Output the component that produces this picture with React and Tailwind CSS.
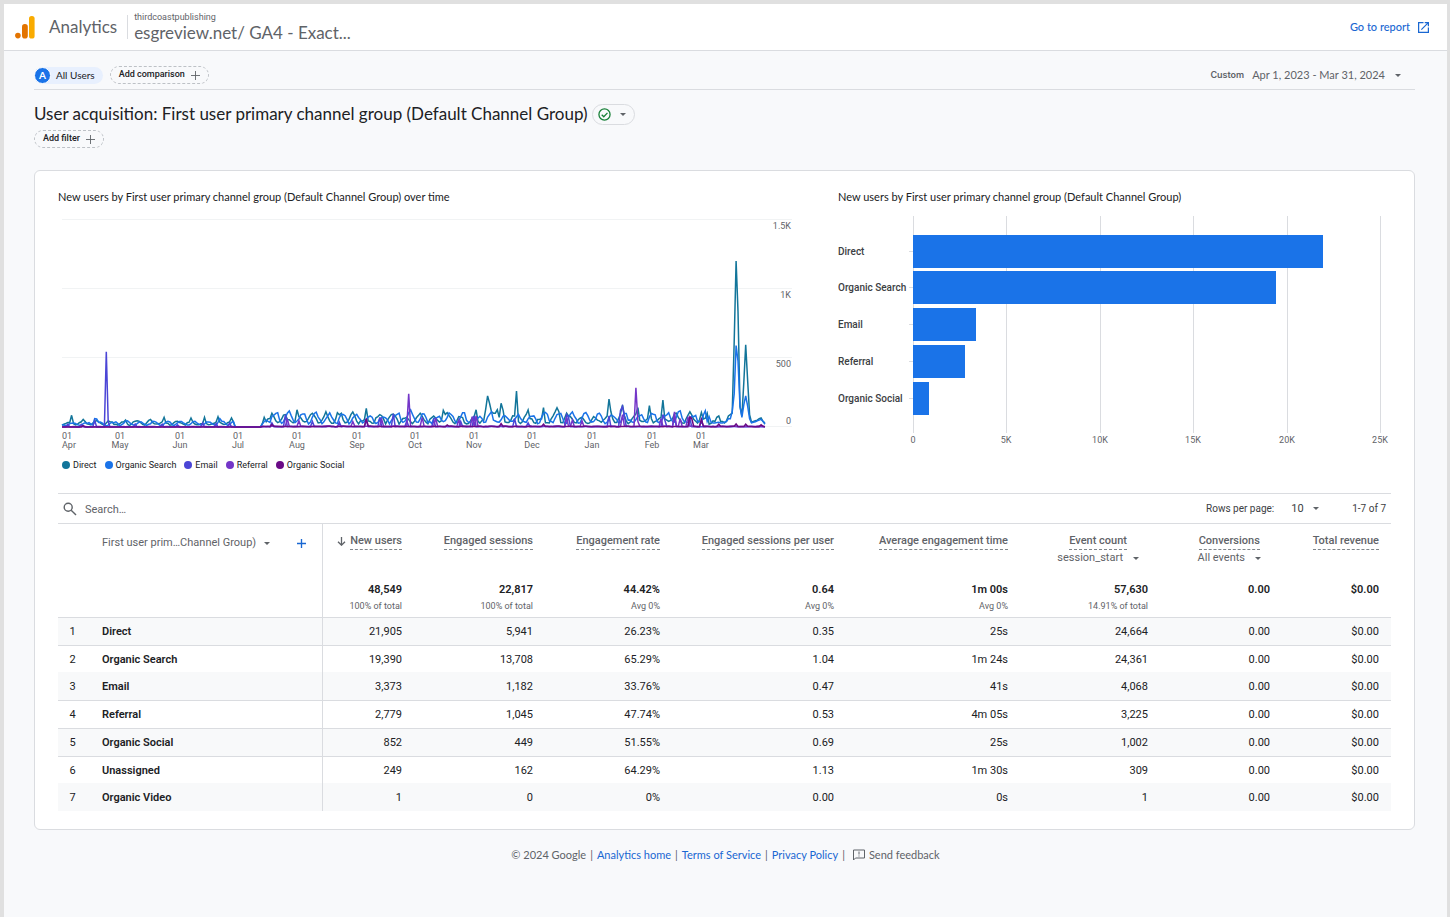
import { useId, useState } from "react";

const DAYS = 366;

// Days of the year range where tracking was off
const isGap = (day) => day > 89 && day < 104;

// Small repeatable wobble so daily values don't look flat
const wobble = (day, seed) => {
  const n = Math.sin(day * 12.9898 + seed * 78.233) * 43758.5453;
  return n - Math.floor(n);
};

function buildSeries({ early, late, weekly, phase, seed, peaks }) {
  const values = [];
  for (let day = 0; day < DAYS; day++) {
    if (day in peaks) {
      values.push(peaks[day]);
      continue;
    }
    if (isGap(day)) {
      values.push(0);
      continue;
    }
    const base = day < 104 ? early : late;
    const wave = 0.5 + 0.5 * Math.sin(((day + phase) / 7) * Math.PI * 2);
    // busier and quieter weeks
    const week = 0.6 + wobble(Math.floor(day / 7), seed) * 0.8;
    values.push(base * (0.3 + wobble(day, seed) * 0.4) + wave * weekly * base * week);
  }
  return values;
}

const series = [
  {
    name: "Direct",
    color: "#12759a",
    values: buildSeries({
      early: 30,
      late: 60,
      weekly: 0.9,
      phase: 5,
      seed: 1,
      peaks: {
        5: 85, 11: 55, 33: 50, 46: 55, 53: 70, 67: 65, 74: 70, 81: 75, 88: 65,
        104: 25, 105: 70, 109: 100, 122: 125, 130: 100, 137: 110, 145: 100,
        150: 90, 158: 135, 171: 90, 186: 100, 198: 120, 215: 125, 220: 130,
        221: 225, 222: 170, 223: 110, 224: 100, 225: 100, 226: 125, 227: 70,
        228: 172, 229: 120, 236: 260, 242: 123, 250: 140, 256: 110, 257: 140,
        258: 110, 263: 80, 270: 70, 284: 203, 285: 110, 291: 160, 299: 140,
        305: 155, 312: 195, 319: 100, 326: 110, 332: 105, 335: 100, 338: 45,
        339: 40, 340: 70, 341: 80, 342: 40, 343: 40, 344: 30, 345: 45, 346: 80,
        347: 90, 348: 100, 349: 620, 350: 1203, 351: 840, 352: 150, 353: 80,
        354: 320, 355: 595, 356: 330, 357: 90, 358: 35, 359: 40, 360: 45,
        361: 50, 362: 60, 363: 65, 364: 40, 365: 30,
      },
    }),
  },
  {
    name: "Organic Search",
    color: "#1a73e8",
    values: buildSeries({
      early: 24,
      late: 60,
      weekly: 1.1,
      phase: 3,
      seed: 2,
      peaks: {
        17: 60, 18: 58, 34: 45, 82: 60, 104: 20, 105: 40, 106: 50, 330: 40,
        335: 40, 337: 35, 338: 30, 339: 30, 340: 32, 341: 35, 342: 30, 343: 30,
        344: 35, 345: 40, 346: 60, 347: 60, 348: 110, 349: 240, 350: 590,
        351: 480, 352: 150, 353: 70, 354: 160, 355: 225, 356: 150, 357: 60,
        358: 30, 359: 35, 360: 38, 361: 45, 362: 50, 363: 55, 364: 40, 365: 20,
      },
    }),
  },
  {
    name: "Email",
    color: "#4b45d6",
    values: buildSeries({
      early: 2,
      late: 4,
      weekly: 0.3,
      phase: 1,
      seed: 3,
      peaks: {
        3: 20, 10: 18, 17: 45, 23: 545, 24: 40, 38: 22, 52: 20, 60: 15,
        73: 30, 80: 25, 87: 28, 109: 30, 116: 90, 130: 40, 144: 35, 158: 50,
        165: 70, 172: 95, 179: 45, 193: 50, 207: 40, 214: 80, 235: 60,
        242: 30, 262: 90, 263: 70, 284: 80, 290: 120, 291: 150, 292: 80,
        312: 90, 313: 50, 318: 75, 326: 60,
      },
    }),
  },
  {
    name: "Referral",
    color: "#7436c8",
    values: buildSeries({
      early: 3,
      late: 6,
      weekly: 0.5,
      phase: 4,
      seed: 4,
      peaks: {
        117: 60, 123: 45, 151: 40, 166: 55, 180: 240, 187: 70, 194: 65,
        206: 50, 213: 75, 215: 80, 262: 70, 265: 50, 270: 45, 291: 90,
        298: 285, 299: 40, 311: 60, 318: 110, 321: 60, 325: 75, 332: 50,
      },
    }),
  },
  {
    name: "Organic Social",
    color: "#6a0a86",
    values: buildSeries({
      early: 1,
      late: 5,
      weekly: 0.4,
      phase: 3,
      seed: 5,
      peaks: {
        11: 10, 109: 18, 158: 60, 200: 15, 228: 25, 250: 20, 326: 75,
        327: 60, 332: 55, 341: 20, 350: 22, 355: 20, 363: 16,
      },
    }),
  },
];

const months = [
  ["Apr", 12], ["May", 62], ["Jun", 122], ["Jul", 180], ["Aug", 239], ["Sep", 299],
  ["Oct", 357], ["Nov", 416], ["Dec", 474], ["Jan", 534], ["Feb", 594], ["Mar", 643],
];

const bars = [
  { label: "Direct", value: 21905 },
  { label: "Organic Search", value: 19390 },
  { label: "Email", value: 3373 },
  { label: "Referral", value: 2779 },
  { label: "Organic Social", value: 852 },
];

const columns = [
  { title: "New users", total: "48,549", note: "100% of total", sorted: true },
  { title: "Engaged sessions", total: "22,817", note: "100% of total" },
  { title: "Engagement rate", total: "44.42%", note: "Avg 0%" },
  { title: "Engaged sessions per user", total: "0.64", note: "Avg 0%" },
  { title: "Average engagement time", total: "1m 00s", note: "Avg 0%" },
  { title: "Event count", total: "57,630", note: "14.91% of total", picker: "session_start" },
  { title: "Conversions", total: "0.00", note: "", picker: "All events" },
  { title: "Total revenue", total: "$0.00", note: "" },
];

const rows = [
  ["Direct", "21,905", "5,941", "26.23%", "0.35", "25s", "24,664", "0.00", "$0.00"],
  ["Organic Search", "19,390", "13,708", "65.29%", "1.04", "1m 24s", "24,361", "0.00", "$0.00"],
  ["Email", "3,373", "1,182", "33.76%", "0.47", "41s", "4,068", "0.00", "$0.00"],
  ["Referral", "2,779", "1,045", "47.74%", "0.53", "4m 05s", "3,225", "0.00", "$0.00"],
  ["Organic Social", "852", "449", "51.55%", "0.69", "25s", "1,002", "0.00", "$0.00"],
  ["Unassigned", "249", "162", "64.29%", "1.13", "1m 30s", "309", "0.00", "$0.00"],
  ["Organic Video", "1", "0", "0%", "0.00", "0s", "1", "0.00", "$0.00"],
];

// Rows that run into the next one without a rule
const unruled = ["Organic Search", "Unassigned"];

function Caret() {
  return (
    <svg viewBox="0 0 6 3" className="w-[6px] h-[3px] shrink-0" fill="#5f6368" aria-hidden="true">
      <path d="M0 0h6L3 3z" />
    </svg>
  );
}

function Plus({ className }) {
  return (
    <svg viewBox="0 0 10 10" className={className} fill="none" stroke="currentColor" aria-hidden="true">
      <path d="M5 0v10M0 5h10" />
    </svg>
  );
}

function Header() {
  return (
    <header className="flex items-center h-[47px] pl-[11px] pr-[18px] bg-white border-b border-[#dadce0]">
      <svg viewBox="0 0 20 23" className="w-5 h-[23px] mr-[14px]" aria-label="Analytics logo">
        <rect x="14" y="0" width="5.6" height="22.5" rx="2.6" fill="#f9ab00" />
        <rect x="7" y="8" width="5.8" height="14.5" rx="2.8" fill="#e37400" />
        <circle cx="2.9" cy="19.6" r="2.8" fill="#e37400" />
      </svg>
      <span className="text-[17px] text-[#5f6368]">Analytics</span>
      <span className="w-px h-6 ml-[10px] mr-[6px] bg-[#dadce0]" />
      <div className="flex flex-col text-[#5f6368]">
        <span className="font-[Roboto] text-[9px] leading-3">thirdcoastpublishing</span>
        <span className="text-[17px] leading-5">esgreview.net/ GA4 - Exact...</span>
      </div>
      <a href="#report" className="flex items-center gap-2 ml-auto text-[11px] font-medium text-[#1967d2]">
        Go to report
        <svg viewBox="3 3 18 18" className="w-[11px] h-[11px]" fill="currentColor" aria-hidden="true">
          <path d="M19 19H5V5h7V3H3v18h18v-9h-2v7zM14 3v2h3.600l-9.800 9.800 1.400 1.400L19 6.400V10h2V3h-7z" />
        </svg>
      </a>
    </header>
  );
}

function ComparisonBar() {
  return (
    <div className="flex items-center h-[39px] pt-[10px] border-b border-[#dadce0]">
      <button className="flex items-center gap-[5px] h-[17px] pr-2 rounded-full bg-[#e8f0fe] text-[10px] text-[#202124]">
        <span className="flex items-center justify-center w-[17px] h-[17px] rounded-full border border-white bg-[#1a73e8] text-[10px] font-bold text-white">
          A
        </span>
        All Users
      </button>
      <button className="flex items-center gap-[6px] h-[18px] ml-[7px] px-2 rounded-full border border-dashed border-[#bdc1c6] font-[Roboto] text-[9px] font-medium text-[#202124]">
        Add comparison
        <Plus className="w-[9px] h-[9px] text-[#5f6368]" />
      </button>
      <button className="flex items-center ml-auto pr-[14px] text-[#5f6368]">
        <span className="mr-2 font-[Inter] text-[9px] font-semibold">Custom</span>
        <span className="mr-[10px] text-[11px]">Apr 1, 2023 - Mar 31, 2024</span>
        <Caret />
      </button>
    </div>
  );
}

function TitleBar() {
  return (
    <div className="pt-[13px]">
      <div className="flex items-center gap-1">
        <h1 className="text-[17px] leading-[22px] text-[#202124]">
          User acquisition: First user primary channel group (Default Channel Group)
        </h1>
        <button aria-label="Report status" className="flex items-center gap-[9px] h-[21px] pl-[5px] pr-2 rounded-full border border-[#dadce0]">
          <svg viewBox="0 0 14 14" className="w-[13px] h-[13px]" fill="none" stroke="#188038" strokeWidth="1.4" aria-hidden="true">
            <circle cx="7" cy="7" r="6" />
            <path d="M4 7.200l2.200 2.200 4-4.200" />
          </svg>
          <Caret />
        </button>
      </div>
      <button className="flex items-center gap-[6px] h-[18px] mt-[5px] px-2 rounded-full border border-dashed border-[#bdc1c6] font-[Roboto] text-[9px] font-medium text-[#202124]">
        Add filter
        <Plus className="w-[9px] h-[9px] text-[#5f6368]" />
      </button>
    </div>
  );
}

function LineChart() {
  const left = 4;
  const bottom = 212;
  const toPoints = (values) =>
    values
      .map((v, day) => `${(left + day * 1.926).toFixed(1)},${(bottom - v * 0.138).toFixed(1)}`)
      .join(" ");

  return (
    <div>
      <h2 className="text-[11px] leading-[14px] text-[#202124]">
        New users by First user primary channel group (Default Channel Group) over time
      </h2>
      <svg viewBox="0 0 780 240" className="block w-full mt-[11px] font-[Roboto] text-[9px]" role="img" aria-label="New users over time">
        {[4, 73, 142, 211].map((y) => (
          <path key={y} d={`M4 ${y}.500H734`} stroke="#f1f3f4" />
        ))}
        {series.map((s) => (
          <polyline key={s.name} points={toPoints(s.values)} fill="none" stroke={s.color} strokeWidth="1.5" />
        ))}
        <g fill="#5f6368" textAnchor="end">
          <text x="733" y="14">1.5K</text>
          <text x="733" y="83">1K</text>
          <text x="733" y="152">500</text>
          <text x="733" y="209">0</text>
        </g>
        <g fill="#5f6368" textAnchor="middle">
          {months.map(([month, x]) => (
            <g key={month}>
              <text x={month === "Apr" ? 9 : x} y="224">01</text>
              <text x={month === "Apr" ? 11 : x} y="233">{month}</text>
            </g>
          ))}
        </g>
      </svg>
      <ul className="flex gap-2 pl-1 mt-1 font-[Roboto] text-[9px] leading-3 text-[#202124]">
        {series.map((s) => (
          <li key={s.name} className="flex items-center gap-[3px]">
            <svg viewBox="0 0 8 8" className="w-2 h-2" aria-hidden="true">
              <circle cx="4" cy="4" r="4" fill={s.color} />
            </svg>
            {s.name}
          </li>
        ))}
      </ul>
    </div>
  );
}

function BarChart() {
  const ticks = ["0", "5K", "10K", "15K", "20K", "25K"];

  return (
    <div>
      <h2 className="text-[11px] leading-[14px] text-[#202124]">
        New users by First user primary channel group (Default Channel Group)
      </h2>
      <svg viewBox="0 0 553 240" className="block w-full mt-[11px] font-[Roboto] text-[9px]" role="img" aria-label="New users by channel">
        {ticks.map((tick, i) => {
          const x = Math.round(75 + i * 93.4);
          return (
            <g key={tick}>
              <path d={`M${x}.500 1V218`} stroke="#dadce0" />
              <text x={x} y="228" fill="#5f6368" textAnchor="middle">{tick}</text>
            </g>
          );
        })}
        {bars.map((bar, i) => {
          const y = Math.floor(20 + i * 36.75);
          return (
            <g key={bar.label}>
              <path d={`M71 ${y + 16}.500h4`} stroke="#dadce0" />
              <rect x="75" y={y} width={Math.round(bar.value * 0.0187)} height="33" fill="#1a73e8" />
              <text x="0" y={y + 20} fill="#3c4043" className="text-[10px] font-medium">{bar.label}</text>
            </g>
          );
        })}
      </svg>
    </div>
  );
}

function TableToolbar() {
  const searchId = useId();
  const rowsId = useId();
  const [query, setQuery] = useState("");

  return (
    <div className="flex items-center h-[31px] pl-[5px] pr-[5px] border-y border-[#dadce0] font-[Roboto] text-[10px] text-[#3c4043]">
      <label htmlFor={searchId} className="mr-2" aria-label="Search">
        <svg viewBox="0 0 14 14" className="w-[14px] h-[14px]" fill="none" stroke="#5f6368" strokeWidth="1.4" aria-hidden="true">
          <circle cx="5.200" cy="5.200" r="4" />
          <path d="M8.200 8.200L13 13" />
        </svg>
      </label>
      <input
        id={searchId}
        value={query}
        onChange={(e) => setQuery(e.target.value)}
        placeholder="Search…"
        className="w-60 h-5 pt-px text-[11px] outline-none placeholder:text-[#5f6368]"
      />
      <label htmlFor={rowsId} className="ml-auto mr-[17px]">Rows per page:</label>
      <div className="flex items-center mr-[33px]">
        <select id={rowsId} defaultValue="10" className="w-[22px] h-5 pt-px appearance-none text-[11px] outline-none">
          <option>10</option>
          <option>25</option>
          <option>50</option>
        </select>
        <Caret />
      </div>
      <span>1-7 of 7</span>
    </div>
  );
}

function DataTable() {
  return (
    <table className="w-full table-fixed font-[Roboto] text-[11px] leading-4 text-[#202124]">
      <colgroup>
        <col className="w-[44px]" />
        <col className="w-[220px]" />
        <col className="w-[92px]" />
        <col className="w-[131px]" />
        <col className="w-[127px]" />
        <col className="w-[174px]" />
        <col className="w-[174px]" />
        <col className="w-[140px]" />
        <col className="w-[122px]" />
        <col className="w-[109px]" />
      </colgroup>
      <thead>
        <tr className="h-[57px] align-top text-[#5f6368]">
          <th colSpan={2} className="pt-[11px] pl-11 border-r border-[#dadce0] font-normal">
            <div className="flex items-center">
              <button className="flex items-center gap-2">
                First user prim…Channel Group)
                <Caret />
              </button>
              <button aria-label="Add dimension" className="ml-auto mr-4 text-[#1967d2]">
                <Plus className="w-[9px] h-[9px] stroke-[1.5]" />
              </button>
            </div>
          </th>
          {columns.map((col) => (
            <th key={col.title} className="pt-[9px] pr-3 font-medium">
              <div className="flex flex-col items-end">
                <div className={col.picker ? "flex flex-col items-center pr-[9px]" : "flex items-center gap-1"}>
                  {col.sorted && (
                    <svg viewBox="0 0 9 9" className="w-[9px] h-[9px]" fill="none" stroke="#5f6368" strokeWidth="1.300" aria-hidden="true">
                      <path d="M4.500 0v8M1 4.700l3.500 3.500L8 4.700" />
                    </svg>
                  )}
                  <span className="border-b border-dashed border-[#80868b] whitespace-nowrap">{col.title}</span>
                  {col.picker && (
                    <button className="flex items-center gap-[10px] font-normal">
                      {col.picker}
                      <Caret />
                    </button>
                  )}
                </div>
              </div>
            </th>
          ))}
        </tr>
        <tr className="h-9 align-top text-right border-b border-[#dadce0]">
          <td colSpan={2} className="border-r border-[#dadce0]" />
          {columns.map((col) => (
            <td key={col.title} className="pt-px pr-3 whitespace-nowrap">
              <div className="font-semibold">{col.total}</div>
              <div className="text-[9px] text-[#5f6368]">{col.note}</div>
            </td>
          ))}
        </tr>
      </thead>
      <tbody>
        {rows.map(([name, ...values], i) => (
          <tr
            key={name}
            className={
              unruled.includes(name)
                ? "h-[27px]"
                : "h-7 border-b border-[#dadce0] last:border-b-0 odd:bg-[#f8f9fa]"
            }
          >
            <td className="pt-[2px] pr-[15px] text-center">{i + 1}</td>
            <th scope="row" className="pt-[2px] text-left font-semibold border-r border-[#dadce0]">{name}</th>
            {values.map((value, j) => (
              <td key={j} className="pt-[2px] pr-3 text-right">{value}</td>
            ))}
          </tr>
        ))}
      </tbody>
    </table>
  );
}

function Footer() {
  return (
    <footer className="flex items-center justify-center gap-1 mt-[15px] text-[11px] leading-5 text-[#5f6368]">
      <span>© 2024 Google</span>|
      <a href="#home" className="text-[#1967d2]">Analytics home</a>|
      <a href="#terms" className="text-[#1967d2]">Terms of Service</a>|
      <a href="#privacy" className="text-[#1967d2]">Privacy Policy</a>|
      <button className="flex items-center gap-1 ml-1">
        <svg viewBox="0 0 12 12" className="w-3 h-3" fill="none" stroke="currentColor" aria-hidden="true">
          <path d="M.5 11V1h11v8h-9z" />
          <path d="M6 2.500v3M6 6.500v1" />
        </svg>
        Send feedback
      </button>
    </footer>
  );
}

export default function App() {
  return (
    <div className="min-h-screen flex flex-col pt-1 pl-1 pr-[3px] bg-[#e0e0e0] font-[Lato,sans-serif]">
      <div className="grow bg-[#f8f9fb]">
        <Header />
        <main className="pl-[30px] pr-8">
          <ComparisonBar />
          <TitleBar />
          <section className="mt-[22px] px-[23px] pt-[19px] pb-[18px] bg-white border border-[#dadce0] rounded-md">
            <div className="grid grid-cols-[780fr_553fr]">
              <LineChart />
              <BarChart />
            </div>
            <div className="mt-[22px]">
              <TableToolbar />
              <DataTable />
            </div>
          </section>
        </main>
        <Footer />
      </div>
    </div>
  );
}
